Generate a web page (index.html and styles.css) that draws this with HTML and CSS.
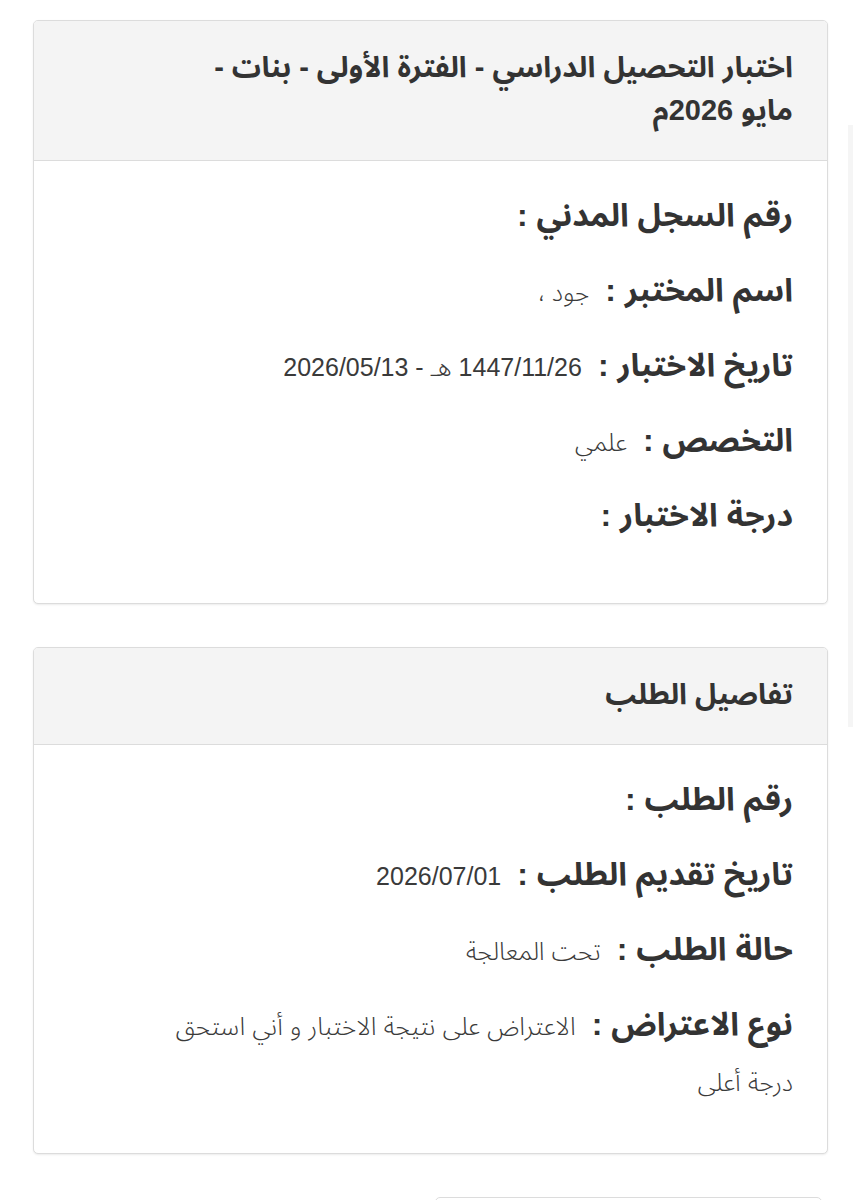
FILE: index.html
```html
<!DOCTYPE html>
<html lang="ar" dir="rtl">

<head>
  <meta charset="UTF-8">
  <meta name="viewport" content="width=device-width, initial-scale=1.0">
  <title>تفاصيل الطلب</title>
  <link rel="stylesheet" href="styles.css">
</head>

<body>
  <div class="scroll-track"></div>

  <div class="panel">
    <div class="panel-heading">
      <h3 class="panel-title">اختبار التحصيل الدراسي - الفترة الأولى - بنات - مايو&nbsp;2026م</h3>
    </div>
    <div class="panel-body first">
      <p class="row"><span class="label">رقم السجل المدني :</span></p>
      <p class="row"><span class="label">اسم المختبر :</span><span class="value">جود ،</span></p>
      <p class="row"><span class="label">تاريخ الاختبار :</span><span class="value">1447/11/26 هـ - 2026/05/13</span></p>
      <p class="row"><span class="label">التخصص :</span><span class="value">علمي</span></p>
      <p class="row"><span class="label">درجة الاختبار :</span></p>
    </div>
  </div>

  <div class="panel">
    <div class="panel-heading">
      <h3 class="panel-title">تفاصيل الطلب</h3>
    </div>
    <div class="panel-body">
      <p class="row"><span class="label">رقم الطلب :</span></p>
      <p class="row"><span class="label">تاريخ تقديم الطلب :</span><span class="value">2026/07/01</span></p>
      <p class="row"><span class="label">حالة الطلب :</span><span class="value">تحت المعالجة</span></p>
      <p class="row"><span class="label">نوع الاعتراض :</span><span class="value">الاعتراض على نتيجة الاختبار و أني استحق</span> <span class="value">درجة&nbsp;أعلى</span></p>
    </div>
  </div>

  <div class="actions"></div>
</body>

</html>
```

FILE: styles.css
```css
body {
  font-family: "Liberation Sans", "Noto Sans Arabic", "DejaVu Sans", sans-serif;
  background-color: #fff;
  color: #333;
  margin: 0;
  padding: 20px 33px 0;
  position: relative;
}

.scroll-track {
  position: absolute;
  left: 848px;
  top: 125px;
  width: 5px;
  height: 602px;
  background: #f5f5f5;
}

.panel {
  border: 1px solid #dcdcdc;
  border-radius: 5px;
  background: #fff;
  box-shadow: 0 1px 2px rgba(0, 0, 0, 0.08);
  margin-bottom: 43px;
  overflow: hidden;
}

.panel-heading {
  background: #f4f4f4;
  border-bottom: 1px solid #dcdcdc;
  padding: 25px 34px 28px 60px;
}

.panel-title {
  margin: 0;
  font-size: 29px;
  line-height: 43px;
  font-weight: bold;
  color: #333;
}

.panel-body {
  padding: 26px 34px 26px 80px;
}

.panel-body.first {
  padding-bottom: 41px;
}

.row {
  margin: 0 0 17px;
  line-height: 56px;
  font-size: 25px;
}

.label {
  font-size: 32px;
  font-weight: bold;
  color: #333;
  margin-left: 16px;
}

.value {
  font-size: 25px;
  color: #3a3a3a;
  font-weight: 300;
}

.actions {
  margin: 0 6px 0 0;
  width: 385px;
  height: 40px;
  border: 1px solid #dcdcdc;
  border-radius: 5px;
}
```
